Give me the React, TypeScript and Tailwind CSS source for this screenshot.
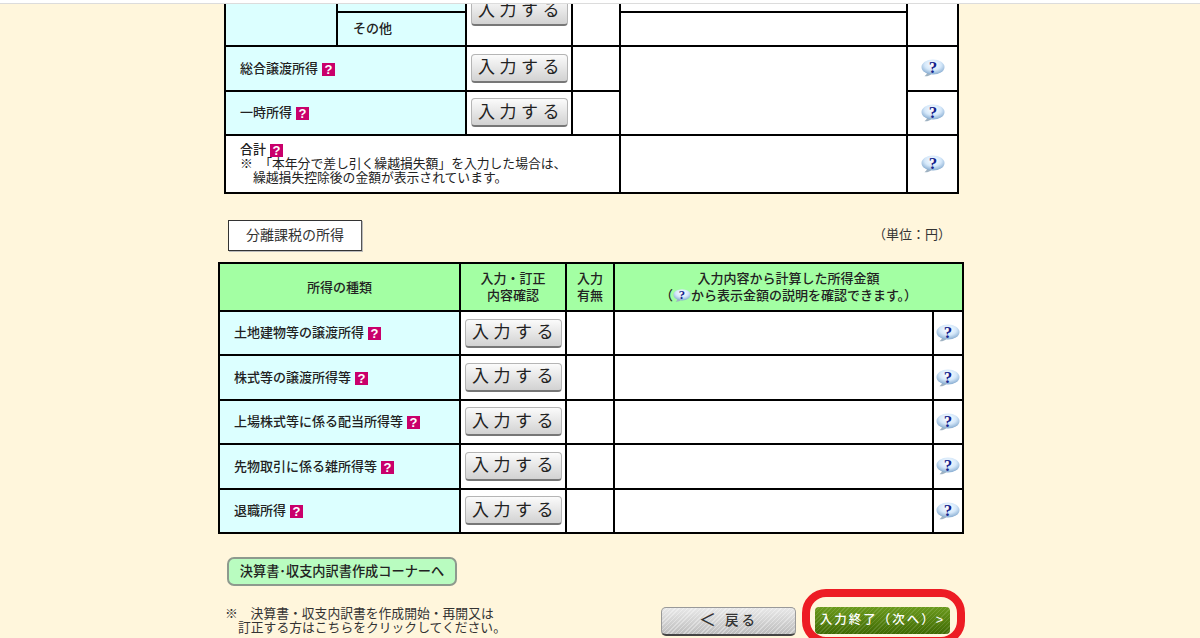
const jp = "font-['Liberation_Sans','Noto_Sans_CJK_JP',sans-serif]";

function HelpBadge() {
  return (
    <span className="ml-[4px] inline-flex h-[13px] w-[13px] items-center justify-center bg-[#c9006b] align-[-1px] font-['Liberation_Sans',sans-serif] text-[13px] leading-none font-bold text-white">
      ?
    </span>
  );
}

function BubbleIcon({ small = false }: { small?: boolean }) {
  return (
    <svg
      viewBox="0 0 24 18"
      className={small ? "inline-block h-[15px] w-[18px] align-[-3px]" : "mx-auto block h-[18px] w-[24px]"}
    >
      <defs>
        <radialGradient id="bubble" cx="0.5" cy="0.35" r="0.65">
          <stop offset="0" stopColor="#ffffff" />
          <stop offset="0.55" stopColor="#d5e8fa" />
          <stop offset="1" stopColor="#86abd0" />
        </radialGradient>
      </defs>
      <path d="M6 13c0 2-1 3-2.500 4.300 3 .2 6-.8 8-3.300z" fill="#9fb2c2" />
      <ellipse cx="12" cy="8" rx="11.500" ry="7.500" fill="url(#bubble)" />
      <text
        x="12"
        y="13.500"
        textAnchor="middle"
        fontFamily="'Liberation Serif', serif"
        fontSize="17"
        fontWeight="700"
        fill="#14238c"
      >
        ?
      </text>
    </svg>
  );
}

function InputButton() {
  return (
    <button className="mx-auto flex h-[29px] w-[97px] items-center justify-center rounded-[4px] border border-[#b5b5b5] border-b-[2px] border-b-[#777] bg-gradient-to-b from-[#fbfbfb] to-[#d2d2d2] pl-[4px] text-[17px] tracking-[4.5px] text-[#222]">
      入力する
    </button>
  );
}

const line = "border-2 border-black";

function IncomeRow({ label }: { label: string }) {
  return (
    <tr className="h-[44.400px]">
      <td className={`${line} bg-[#dcffff] pl-[14px] text-[13px] font-medium text-[#222]`}>
        {label}
        <HelpBadge />
      </td>
      <td className={`${line} bg-white`}>
        <InputButton />
      </td>
      <td className={`${line} bg-white`} />
      <td className={`${line} bg-white`} />
      <td className={`${line} bg-white`}>
        <BubbleIcon />
      </td>
    </tr>
  );
}

export default function App() {
  return (
    <div className={`h-[638px] w-[1200px] overflow-hidden bg-[#fff6dc] ${jp} text-[#222]`}>
      <div className="relative z-10 h-[4px] border-b-[1px] border-[#dcdcdc] bg-white" />
      <div className="-mt-[29px] ml-[218px] w-[760px]">
        <table className="ml-[6px] w-[733px] table-fixed border-collapse">
          <colgroup>
            <col className="w-[112px]" />
            <col className="w-[129px]" />
            <col className="w-[106px]" />
            <col className="w-[48px]" />
            <col className="w-[287px]" />
            <col className="w-[51px]" />
          </colgroup>
          <tbody>
            <tr className="h-[35.500px]">
              <td rowSpan={2} className={`${line} bg-[#dcffff]`} />
              <td className={`${line} bg-[#dcffff]`} />
              <td rowSpan={2} className={`${line} bg-white`}>
                <InputButton />
              </td>
              <td rowSpan={2} className={`${line} bg-white`} />
              <td className={`${line} bg-white`} />
              <td rowSpan={2} className={`${line} bg-white`} />
            </tr>
            <tr className="h-[34.500px]">
              <td className={`${line} bg-[#dcffff] pl-[15px] text-[13px] font-medium`}>その他</td>
              <td className={`${line} bg-white`} />
            </tr>
            <tr className="h-[44.500px]">
              <td colSpan={2} className={`${line} bg-[#dcffff] pl-[14px] text-[13px] font-medium`}>
                総合譲渡所得
                <HelpBadge />
              </td>
              <td className={`${line} bg-white`}>
                <InputButton />
              </td>
              <td className={`${line} bg-white`} />
              <td rowSpan={2} className={`${line} bg-white`} />
              <td className={`${line} bg-white`}>
                <BubbleIcon />
              </td>
            </tr>
            <tr className="h-[44.500px]">
              <td colSpan={2} className={`${line} bg-[#dcffff] pl-[14px] text-[13px] font-medium`}>
                一時所得
                <HelpBadge />
              </td>
              <td className={`${line} bg-white`}>
                <InputButton />
              </td>
              <td className={`${line} bg-white`} />
              <td className={`${line} bg-white`}>
                <BubbleIcon />
              </td>
            </tr>
            <tr className="h-[58px]">
              <td colSpan={4} className={`${line} bg-white pl-[14px] text-[12.800px] leading-[14px]`}>
                <div className="text-[13px] font-medium">
                  合計
                  <HelpBadge />
                </div>
                <div>※　「本年分で差し引く繰越損失額」を入力した場合は、</div>
                <div className="pl-[13px]">繰越損失控除後の金額が表示されています。</div>
              </td>
              <td className={`${line} bg-white`} />
              <td className={`${line} bg-white`}>
                <BubbleIcon />
              </td>
            </tr>
          </tbody>
        </table>

        <div className="mt-[26px] flex w-[745px] items-end justify-between pl-[10px] pr-[12px]">
          <div className="flex h-[31px] w-[134px] items-center justify-center border border-[#333] border-r-[#555] bg-white text-[14px] text-[#333] shadow-[1px_1px_0_#bbb]">
            分離課税の所得
          </div>
          <div className="mb-[7px] text-[13px] text-[#333]">（単位：円）</div>
        </div>

        <table className="mt-[11px] w-[745px] table-fixed border-collapse">
          <colgroup>
            <col className="w-[241px]" />
            <col className="w-[106px]" />
            <col className="w-[48px]" />
            <col className="w-[319px]" />
            <col className="w-[30px]" />
          </colgroup>
          <thead>
            <tr className="h-[48px] bg-[#a3ffa3] text-center text-[13px] leading-[17px] font-medium">
              <th className={`${line} font-medium`}>所得の種類</th>
              <th className={`${line} font-medium`}>
                入力・訂正
                <br />
                内容確認
              </th>
              <th className={`${line} font-medium`}>
                入力
                <br />
                有無
              </th>
              <th colSpan={2} className={`${line} font-medium`}>
                入力内容から計算した所得金額
                <br />（<BubbleIcon small />から表示金額の説明を確認できます。）
              </th>
            </tr>
          </thead>
          <tbody>
            <IncomeRow label="土地建物等の譲渡所得" />
            <IncomeRow label="株式等の譲渡所得等" />
            <IncomeRow label="上場株式等に係る配当所得等" />
            <IncomeRow label="先物取引に係る雑所得等" />
            <IncomeRow label="退職所得" />
          </tbody>
        </table>

        <div className="flex w-[760px] justify-between">
          <div className="pl-[9px]">
            <button className="mt-[23px] flex h-[29px] w-[230px] items-center justify-center rounded-[7px] border-2 border-[#8e9a8e] bg-[#b9fcc0] text-[13.200px] font-medium text-[#222]">
              決算書･収支内訳書作成コーナーへ
            </button>
            <div className="mt-[21px] -ml-[2px] text-[12.800px] leading-[14px] text-[#333]">
              <div>※　決算書・収支内訳書を作成開始・再開又は</div>
              <div className="pl-[13px]">訂正する方はこちらをクリックしてください。</div>
            </div>
          </div>
          <div className="mt-[73px] flex items-start gap-[19px] pr-[28px]">
            <button className="flex h-[29px] w-[135px] items-center justify-center rounded-[5px] border border-[#999] border-b-[2px] border-b-[#444] bg-[repeating-linear-gradient(135deg,rgba(255,255,255,0.35)_0_1px,transparent_1px_3px),linear-gradient(#e8e8e8,#bdbdbd)] text-[13.500px] font-medium tracking-[3px] text-[#333]">
              <span className="mr-[6px] text-[17px]">＜</span>戻る
            </button>
            <div className="relative">
              <button className="flex h-[27px] w-[135px] items-center justify-center rounded-[4px] bg-[repeating-linear-gradient(135deg,rgba(255,255,255,0.12)_0_1px,transparent_1px_3px),linear-gradient(#6b9a1c,#3f6a04)] text-[12.500px] font-medium tracking-[2px] text-white">
                入力終了（次へ）&gt;
              </button>
              <div className="absolute -top-[18px] -right-[15px] -left-[13px] h-[56px] rounded-[24px] border-[8px] border-[#ed1c24]" />
            </div>
          </div>
        </div>
      </div>
    </div>
  );
}
